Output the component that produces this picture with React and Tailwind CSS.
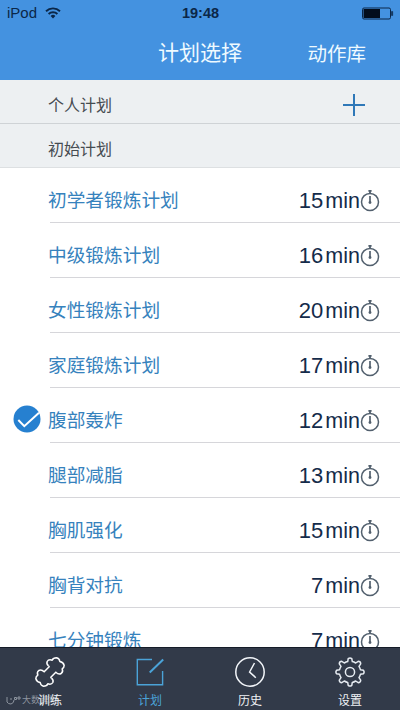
const plans = [
  { name: "初学者锻炼计划", minutes: 15 },
  { name: "中级锻炼计划", minutes: 16 },
  { name: "女性锻炼计划", minutes: 20 },
  { name: "家庭锻炼计划", minutes: 17 },
  { name: "腹部轰炸", minutes: 12, selected: true },
  { name: "腿部减脂", minutes: 13 },
  { name: "胸肌强化", minutes: 15 },
  { name: "胸背对抗", minutes: 7 },
  { name: "七分钟锻炼", minutes: 7 },
];

const tabs = [
  { label: "训练", Icon: DumbbellIcon },
  { label: "计划", Icon: EditIcon, active: true },
  { label: "历史", Icon: ClockIcon },
  { label: "设置", Icon: GearIcon },
];

function WifiIcon() {
  return (
    <svg width="16" height="12" viewBox="0 0 16 12" fill="none" stroke="#0b2748" strokeWidth="1.9">
      <path d="M1 4.2a10.2 10.2 0 0 1 14 0" />
      <path d="M3.6 7a6.4 6.4 0 0 1 8.8 0" />
      <path d="M8 11.4 5.6 8.9a3.5 3.5 0 0 1 4.8 0z" fill="#0b2748" stroke="none" />
    </svg>
  );
}

function BatteryIcon() {
  return (
    <svg width="32" height="13" viewBox="0 0 32 13">
      <rect x="0.5" y="1" width="28" height="11" rx="1.5" fill="none" stroke="#0b2748" />
      <rect x="1.5" y="2" width="16.5" height="9" fill="#020d1c" />
      <path d="M29.5 4.5h1.2v4h-1.2z" fill="#0b2748" stroke="#0b2748" strokeWidth="0.5" />
    </svg>
  );
}

function StopwatchIcon() {
  return (
    <svg width="20" height="24" viewBox="0 0 20 24" fill="none" stroke="#52606e" strokeWidth="1.5">
      <circle cx="10" cy="13.9" r="8.5" />
      <path d="M8.4 2.9h3.2M10 2.5v3" strokeWidth="1.8" />
      <path d="M10 8v6.5" strokeWidth="1.7" />
      <circle cx="10" cy="14.5" r="1.4" fill="#52606e" stroke="none" />
    </svg>
  );
}

function CheckBadge() {
  return (
    <svg width="28" height="28" viewBox="0 0 28 28" fill="none">
      <circle cx="14" cy="14" r="13.5" fill="#2680d0" />
      <path d="m5.3 15 6 6.2L26 7.7" stroke="#fff" strokeWidth="2" />
    </svg>
  );
}

function DumbbellIcon() {
  // half of the outline, the other half is the same path turned by 180 degrees
  const half =
    "M146 166Q139 160 142 153Q146 146 157 149Q160 142 170 142Q179 144 180 153Q191 155 193 165Q193 171 187 175Q191 184 184 189Q176 193 168 185L153 200Q153 202 155 203";
  return (
    <svg width="30" height="30" viewBox="105.5 139.5 90 90" fill="none" stroke="#fff" strokeWidth="4.5" strokeLinejoin="round">
      <path d={half} />
      <path d={half} transform="rotate(180 150.5 184.5)" />
    </svg>
  );
}

function EditIcon() {
  return (
    <svg width="30" height="30" viewBox="0 0 30 30" fill="none" stroke="#4ba3d8" strokeWidth="1.4">
      <path d="M17 2.5H2.3v25.2h25.3V14" />
      <path d="M14.7 15.5 28.2 2.5" strokeWidth="2" />
    </svg>
  );
}

function ClockIcon() {
  return (
    <svg width="30" height="30" viewBox="0 0 30 30" fill="none" stroke="#f3f6fa" strokeWidth="1.5">
      <circle cx="15" cy="15" r="14.2" />
      <path d="m19.5 6-4.9 9 6.2 5.7" />
    </svg>
  );
}

function GearIcon() {
  return (
    <svg width="30" height="30" viewBox="0 0 30 30" fill="none" stroke="#e6ebf1" strokeWidth="1.5" strokeLinejoin="round">
      <circle cx="15" cy="15" r="4.6" />
      <path d="M12.7 4.6 13.2 1.6Q15 .2 16.8 1.6L17.3 4.6Q19 5 20.7 6L23.2 4.3Q25.6 4.4 25.7 6.8L24 9.3Q25 11 25.4 12.7L28.4 13.2Q29.8 15 28.4 16.8L25.4 17.3Q25 19 24 20.7L25.7 23.2Q25.6 25.6 23.2 25.7L20.7 24Q19 25 17.3 25.4L16.8 28.4Q15 29.8 13.2 28.4L12.7 25.4Q11 25 9.3 24L6.8 25.7Q4.4 25.6 4.3 23.2L6 20.7Q5 19 4.6 17.3L1.6 16.8Q.2 15 1.6 13.2L4.6 12.7Q5 11 6 9.3L4.3 6.8Q4.4 4.4 6.8 4.3L9.3 6Q11 5 12.7 4.6Z" />
    </svg>
  );
}

function PlanRow({ name, minutes, selected }) {
  return (
    <li className="flex h-[55px] shrink-0">
      <div className="flex w-12 items-center pl-[13px] pt-[7px]">{selected && <CheckBadge />}</div>
      <div className="ml-0.5 flex flex-1 items-center border-b border-[#d6d6da] pr-5">
        <span className="-ml-0.5 flex-1 pt-[13px] text-[18.7px] leading-none text-[#3682bd]">{name}</span>
        <span className="flex items-baseline gap-[2px] pt-[13px] leading-none text-[#142b4a]">
          <span className="text-[22px]">{minutes}</span>
          <span className="text-[21.5px]">min</span>
        </span>
        <span className="pt-[9px]">
          <StopwatchIcon />
        </span>
      </div>
    </li>
  );
}

export default function App() {
  return (
    <div className="flex h-[710px] w-[400px] flex-col overflow-hidden bg-white font-['Liberation_Sans','Noto_Sans_CJK_SC',sans-serif]">
      {/* Header */}
      <header className="h-20 shrink-0 bg-[#4492e0]">
        <div className="grid h-[26px] grid-cols-3 items-center pl-[7px] pr-[6px] text-[#0b2748]">
          <div className="flex items-center gap-2 text-[15px]">
            <span>iPod</span>
            <WifiIcon />
          </div>
          <span className="pt-px text-center text-[14.5px] font-bold">19:48</span>
          <div className="flex justify-end">
            <BatteryIcon />
          </div>
        </div>
        <div className="grid h-[54px] grid-cols-[1fr_auto_1fr] items-center text-[#effaff]">
          <span />
          <h1 className="pb-px text-[21px] leading-none">计划选择</h1>
          <button className="pr-[34px] pt-[3px] text-right text-[19.5px] leading-none">动作库</button>
        </div>
      </header>

      {/* Sections */}
      <div className="flex h-11 shrink-0 items-center justify-between border-b border-[#cfd3d6] bg-[#edf0f2] pl-12 pr-[34px] pt-2 text-base text-[#454b50]">
        <span>个人计划</span>
        <svg className="-mt-0.5" width="24" height="24" viewBox="0 0 24 24" stroke="#2f78b8" strokeWidth="2">
          <path d="M12 1v22M1 12h22" />
        </svg>
      </div>
      <div className="flex h-11 shrink-0 items-center border-b border-[#dde0e2] bg-[#edf0f2] pl-12 pt-2 text-base text-[#454b50]">
        初始计划
      </div>

      <ul className="flex min-h-0 flex-1 flex-col overflow-hidden">
        {plans.map((plan) => (
          <PlanRow key={plan.name} {...plan} />
        ))}
      </ul>

      {/* Tab bar */}
      <nav className="relative grid h-[63px] shrink-0 grid-cols-4 border-t border-[#151c28] bg-[#323a49]">
        <div className="absolute bottom-[5px] left-1.5 flex items-center gap-px text-[9px] leading-none text-[#8d949f]">
          <svg width="15" height="9" viewBox="0 0 15 9" fill="none" stroke="currentColor">
            <path d="M1 1v5q1 2 4 2 3-1 3-4M5 2v2M8.5 1.5h2v2h-2zM12 1h2v2h-2z" />
          </svg>
          <span>大数跨境</span>
        </div>
        {tabs.map(({ label, Icon, active }) => (
          <div
            key={label}
            className={
              active
                ? "relative flex flex-col items-center pt-[9px] text-[#4ba3d8]"
                : "relative flex flex-col items-center pt-[9px] text-[#f0f2f5]"
            }
          >
            <Icon />
            <span className="mt-2 text-[12px] leading-none">{label}</span>
          </div>
        ))}
      </nav>
    </div>
  );
}
